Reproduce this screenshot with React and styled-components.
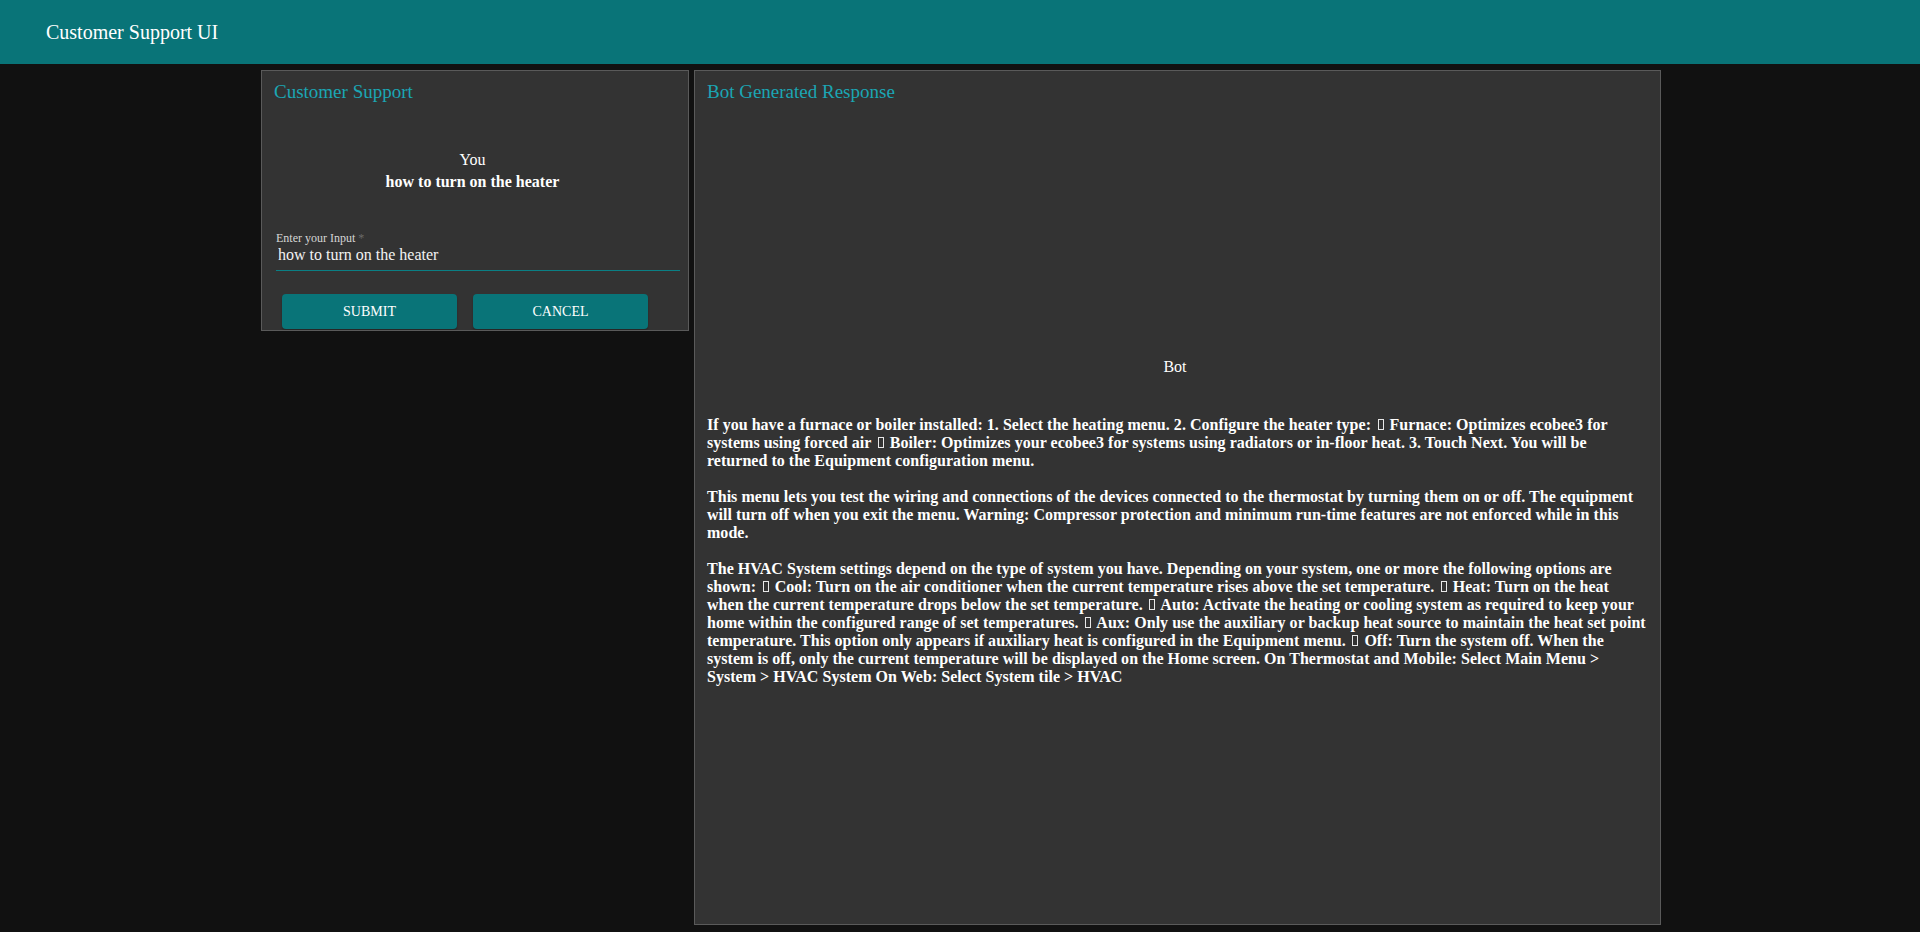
import styled, { createGlobalStyle } from 'styled-components'

const GlobalStyle = createGlobalStyle`
  html, body {
    margin: 0;
    padding: 0;
    background: #111111;
    font-family: "Liberation Serif", "Times New Roman", serif;
    color: #ffffff;
  }
`

const Header = styled.header`
  display: flex;
  align-items: center;
  height: 64px;
  padding-left: 46px;
  background: #097478;
  font-size: 20px;
  color: #ffffff;
`

const Main = styled.main`
  display: flex;
  justify-content: center;
  align-items: flex-start;
  gap: 5px;
  padding: 6px 0 0 2px;
`

const Panel = styled.section`
  box-sizing: border-box;
  display: flex;
  flex-direction: column;
  width: ${props => props.width}px;
  height: ${props => props.height}px;
  padding: 10px 12px 1px;
  border: 1px solid #5a5a5a;
  background: #333333;
  overflow: hidden;
`

const PanelTitle = styled.h2`
  margin: 0;
  font-size: 19px;
  font-weight: 400;
  line-height: 22px;
  color: #1ba6b4;
`

const Speaker = styled.div`
  margin-top: ${props => props.offset}px;
  padding-right: 5px;
  text-align: center;
  font-size: 16px;
  line-height: 22px;
`

const Message = styled.div`
  padding-right: 5px;
  text-align: center;
  font-size: 16px;
  font-weight: 700;
  line-height: 22px;
`

const Form = styled.form`
  display: flex;
  flex-direction: column;
  margin: 38px 0 0 2px;
  width: 404px;
`

const Label = styled.label`
  font-size: 12px;
  line-height: 14px;
  color: #d6d6d6;

  span {
    color: #6a6a6a;
    margin-left: 3px;
  }
`

const Input = styled.input`
  box-sizing: border-box;
  height: 26px;
  padding: 0 2px 5px;
  border: none;
  border-bottom: 1px solid #0a8085;
  background: transparent;
  outline: none;
  font-family: inherit;
  font-size: 16px;
  line-height: 20px;
  color: #f2f2f2;
`

const ButtonRow = styled.div`
  display: flex;
  gap: 16px;
  margin-top: 23px;
  padding-left: 8px;
`

const Button = styled.button`
  width: 175px;
  height: 35px;
  border: none;
  border-radius: 4px;
  background: #097478;
  box-shadow: 0 2px 2px rgba(0, 0, 0, 0.25);
  font-family: inherit;
  font-size: 14px;
  text-transform: uppercase;
  color: #ffffff;
`

const Answer = styled.div`
  margin-top: 38px;
  font-size: 16px;
  font-weight: 700;
  line-height: 18px;
  letter-spacing: 0.03px;
`

const Paragraph = styled.p`
  margin: 0 0 18px;
`

// the bullet char has no glyph in the source font, so it shows as an empty box
const Tofu = styled.span`
  display: inline-block;
  box-sizing: border-box;
  width: 6px;
  height: 11px;
  margin: 0 2px 0 2.5px;
  border: 1px solid #e8e8e8;
  color: transparent;
  line-height: 9px;
  overflow: hidden;
  vertical-align: baseline;
`

const answer = [
  'If you have a furnace or boiler installed: 1. Select the heating menu. 2. Configure the heater type: \uf0b7 Furnace: Optimizes ecobee3 for systems using forced air \uf0b7 Boiler: Optimizes your ecobee3 for systems using radiators or in-floor heat. 3. Touch Next. You will be returned to the Equipment configuration menu.',
  'This menu lets you test the wiring and connections of the devices connected to the thermostat by turning them on or off. The equipment will turn off when you exit the menu. Warning: Compressor protection and minimum run-time features are not enforced while in this mode.',
  'The HVAC System settings depend on the type of system you have. Depending on your system, one or more the following options are shown: \uf0b7 Cool: Turn on the air conditioner when the current temperature rises above the set temperature. \uf0b7 Heat: Turn on the heat when the current temperature drops below the set temperature. \uf0b7 Auto: Activate the heating or cooling system as required to keep your home within the configured range of set temperatures. \uf0b7 Aux: Only use the auxiliary or backup heat source to maintain the heat set point temperature. This option only appears if auxiliary heat is configured in the Equipment menu. \uf0b7 Off: Turn the system off. When the system is off, only the current temperature will be displayed on the Home screen. On Thermostat and Mobile: Select Main Menu > System > HVAC System On Web: Select System tile > HVAC',
]

const renderText = text =>
  text.split('\uf0b7').map((part, idx) => (
    <span key={idx}>
      {idx > 0 && <Tofu>{'\uf0b7'}</Tofu>}
      {part}
    </span>
  ))

export default function App() {
  const query = 'how to turn on the heater'

  return (
    <>
      <GlobalStyle />
      <Header>Customer Support UI</Header>
      <Main>
        <Panel width={428} height={261}>
          <PanelTitle>Customer Support</PanelTitle>
          <Speaker offset={46}>You</Speaker>
          <Message>{query}</Message>

          <Form onSubmit={e => e.preventDefault()}>
            <Label htmlFor="query">
              Enter your Input<span>*</span>
            </Label>
            <Input id="query" defaultValue={query} />
          </Form>

          <ButtonRow>
            <Button type="button">Submit</Button>
            <Button type="button">Cancel</Button>
          </ButtonRow>
        </Panel>

        <Panel width={967} height={855}>
          <PanelTitle>Bot Generated Response</PanelTitle>
          <Speaker offset={253}>Bot</Speaker>
          <Answer>
            {answer.map((text, idx) => (
              <Paragraph key={idx}>{renderText(text)}</Paragraph>
            ))}
          </Answer>
        </Panel>
      </Main>
    </>
  )
}
